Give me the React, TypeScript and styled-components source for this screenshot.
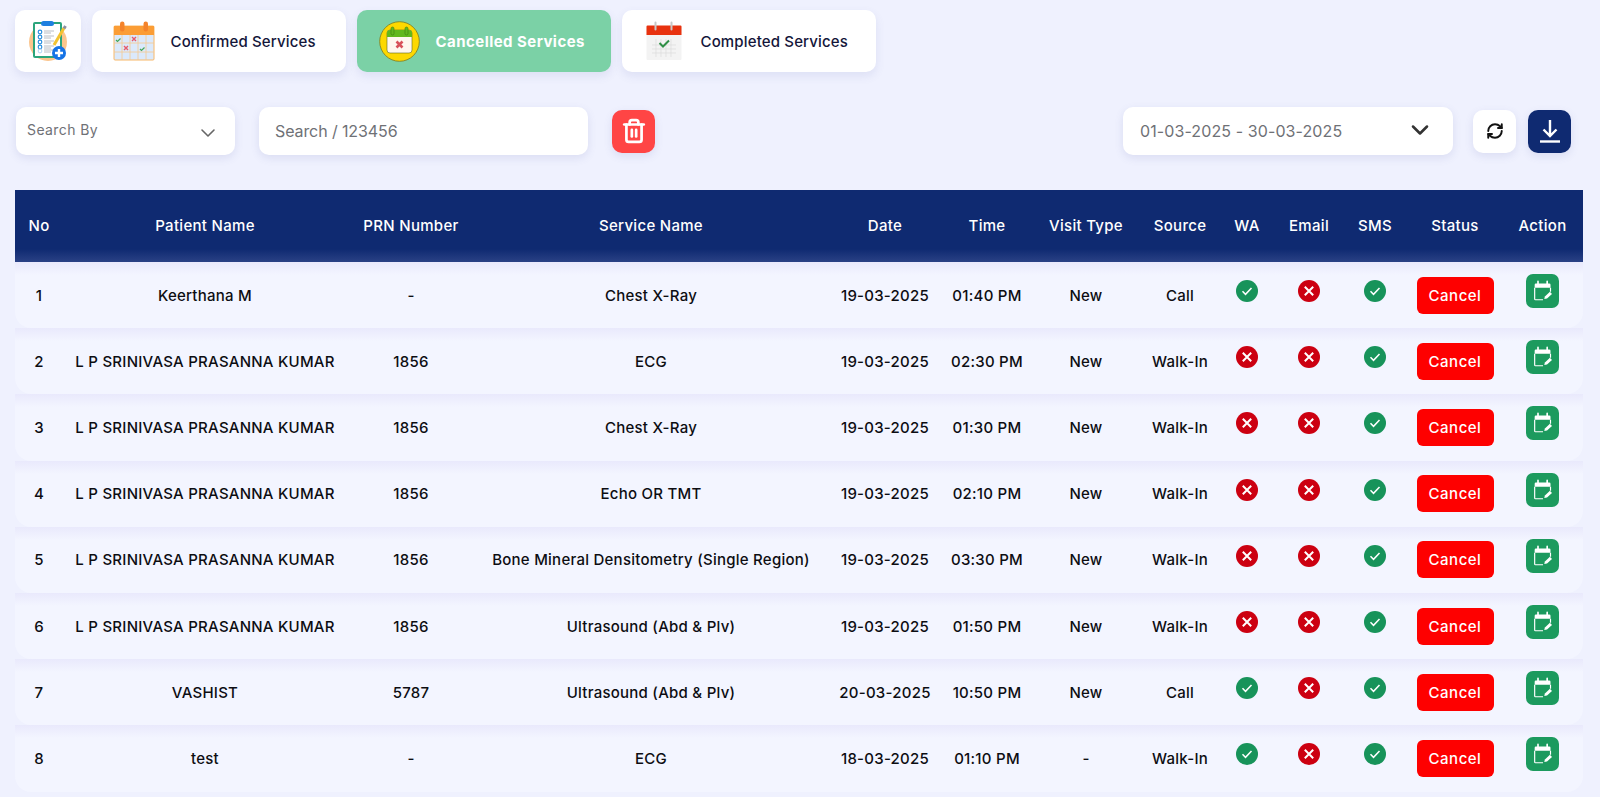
import * as React from 'react';
import styled, { createGlobalStyle } from 'styled-components';
import { ChevronDown, RefreshCw, Trash2 } from 'lucide-react';

const GlobalStyle = createGlobalStyle`
  html, body {
    margin: 0;
    padding: 0;
    height: 797px;
    overflow: hidden;
    background: #eff1fe;
    font-family: Inter, "Noto Sans", sans-serif;
  }
  * { box-sizing: border-box; }
`;

const Page = styled.div`
  padding: 10px 17px 0 15px;
`;

const Tabs = styled.div`
  display: flex;
  gap: 11px;
`;

const Tab = styled.div<{ $active?: boolean; $icon?: boolean }>`
  width: ${(p) => (p.$icon ? '66px' : '254px')};
  height: 62px;
  display: flex;
  align-items: center;
  justify-content: ${(p) => (p.$icon ? 'center' : 'flex-start')};
  padding-left: ${(p) => (p.$icon ? '0' : '12px')};
  gap: 6.5px;
  border-radius: 10px;
  background: ${(p) => (p.$active ? '#7bd1a6' : '#fff')};
  color: ${(p) => (p.$active ? '#fff' : '#14163a')};
  font-size: 15px;
  font-weight: ${(p) => (p.$active ? 700 : 500)};
  letter-spacing: ${(p) => (p.$active ? '0.45px' : '0.15px')};
  box-shadow: 0 4px 10px rgba(90, 100, 170, 0.12);
`;

const TabIcon = styled.span`
  width: 60px;
  display: flex;
  justify-content: center;
`;

const Toolbar = styled.div`
  display: flex;
  align-items: center;
  margin-top: 35px;
  padding-left: 1px;
  height: 48px;
`;

const Field = styled.div<{ $width: number; $size: number }>`
  width: ${(p) => p.$width}px;
  height: 48px;
  display: flex;
  align-items: center;
  justify-content: space-between;
  background: #fff;
  border-radius: 10px;
  color: #6f7176;
  font-size: ${(p) => p.$size}px;
  box-shadow: 0 3px 8px rgba(90, 100, 170, 0.14);
`;

const SelectField = styled(Field)`
  padding: 0 15px 4px 11px;
  margin-right: 24px;
  letter-spacing: 0.4px;
  svg { margin-top: 7px; }
`;

const SearchField = styled(Field)`
  padding: 0 16px;
  margin-right: 24px;
  letter-spacing: -0.1px;
`;

const DateField = styled(Field)`
  margin-left: auto;
  padding: 0 19px 0 17px;
  margin-right: 20px;
  letter-spacing: 0.1px;
  svg { margin-top: -2px; }
`;

const IconButton = styled.div<{ $bg: string }>`
  width: 43px;
  height: 43px;
  border-radius: 10px;
  display: flex;
  align-items: center;
  justify-content: center;
  background: ${(p) => p.$bg};
  box-shadow: 0 3px 8px rgba(90, 100, 170, 0.14);
  color: #fff;
`;

const ExportButton = styled(IconButton)`
  margin-left: 12px;
  margin-right: 12px;
`;

const columns = '48px 284px 128px 352px 116px 88px 110px 78px 56px 68px 64px 96px 79px';

const TableWrap = styled.div`
  margin-top: 35px;
  display: flex;
  flex-direction: column;
`;

const HeadRow = styled.div`
  display: grid;
  grid-template-columns: ${columns};
  align-items: center;
  height: 72px;
  padding-bottom: 2px;
  background: linear-gradient(#0f2a71 0, #0f2a71 82%, #2a4185 100%);
  color: #fff;
  font-size: 15px;
  font-weight: 500;
  letter-spacing: 0.3px;
`;

const Row = styled.div`
  display: grid;
  grid-template-columns: ${columns};
  align-items: center;
  height: 66.2px;
  background: linear-gradient(#e9e9fc 0, #f3f5ff 13px);
  border-radius: 0 0 16px 16px;
  color: #0d0d12;
  font-size: 15px;
  font-weight: 450;
  letter-spacing: 0.25px;
`;

const Cell = styled.div`
  text-align: center;
  white-space: nowrap;
  display: flex;
  justify-content: center;
  align-items: center;
`;

const IconCell = styled(Cell)`
  padding-bottom: 8px;
`;

const CancelButton = styled.div`
  width: 77px;
  height: 37px;
  border-radius: 6px;
  background: #fe0000;
  color: #fff;
  display: flex;
  align-items: center;
  justify-content: center;
  font-size: 15px;
  letter-spacing: 0.5px;
`;

const ActionButton = styled.div`
  width: 33px;
  height: 34px;
  border-radius: 7px;
  background: #1c9a5e;
  display: flex;
  align-items: center;
  justify-content: center;
`;

const StatusIcon = ({ ok }: { ok: boolean }) => (
  <svg width="22" height="22" viewBox="0 0 22 22">
    <circle cx="11" cy="11" r="11" fill={ok ? '#17935a' : '#cc0011'} />
    {ok ? (
      <path d="M6.5 11.3l3 3 6-6.4" fill="none" stroke="#fff" strokeWidth="1.5" />
    ) : (
      <path d="M6.8 6.8l8.4 8.4M15.2 6.8l-8.4 8.4" fill="none" stroke="#fff" strokeWidth="2" />
    )}
  </svg>
);

const CalendarEdit = () => (
  <svg width="20" height="22" viewBox="0 0 24 26" fill="none">
    <path d="M2 9h19V5.500a1.500 1.500 0 0 0-1.500-1.500h-16A1.500 1.500 0 0 0 2 5.500z" fill="#fff" />
    <path d="M6 1.500v4M17 1.500v4" stroke="#fff" strokeWidth="2" strokeLinecap="round" />
    <path d="M2 9v13.500a1 1 0 0 0 1 1h9M21 9v5" stroke="#fff" strokeWidth="1.400" />
    <path d="M13.500 22.500l.8-3 6-5.500 2.500 2.500-6 5.500z" fill="#fff" />
  </svg>
);

const ClipboardLogo = () => (
  <svg width="42" height="42" viewBox="0 0 42 42">
    <circle cx="21" cy="22" r="19" fill="#fbc58d" />
    <rect x="6" y="2" width="29" height="36" rx="2" fill="#2ba57c" />
    <rect x="8" y="4" width="25" height="32" fill="#fff" />
    <rect x="14" y="1" width="13" height="5" rx="2.500" fill="#1f80e0" />
    {[12, 17, 22, 27, 31].map((y) => (
      <g key={y}>
        <circle cx="13" cy={y} r="1.800" fill="none" stroke={y === 31 ? '#bcdcf5' : '#2b8fe0'} strokeWidth="1.200" />
        <path d={`M17 ${y - 1}h10M17 ${y + 1}h7`} stroke="#b9bdc4" strokeWidth="1" />
      </g>
    ))}
    <path d="M27 25L37 8" stroke="#f3c331" strokeWidth="3" />
    <path d="M37 8.500l1.500-2.500" stroke="#8a8fa0" strokeWidth="3" />
    <circle cx="32" cy="33" r="7" fill="#1573e6" />
    <path d="M32 29v8M28 33h8" stroke="#fff" strokeWidth="2.400" />
  </svg>
);

const ConfirmedLogo = () => (
  <svg width="42" height="40" viewBox="0 0 42 40">
    <rect x="1" y="5" width="40" height="34" rx="1" fill="#dbe9fb" stroke="#f8b869" />
    <rect x="1" y="5" width="40" height="9" fill="#fb9d35" />
    <rect x="7" y="0.500" width="4.500" height="10" rx="2.200" fill="#f4832a" />
    <rect x="30.500" y="0.500" width="4.500" height="10" rx="2.200" fill="#f4832a" />
    <path d="M1 22h40M1 31h40M9 14v25M17 14v25M25 14v25M33 14v25" stroke="#f6c88f" strokeWidth="0.800" />
    <path d="M3 19l1.500 1.500 3-3M27 28l1.500 1.500 3-3" stroke="#46a65a" strokeWidth="1.200" fill="none" />
    <path d="M19 16l4 4M23 16l-4 4M11 25l4 4M15 25l-4 4" stroke="#e65a6b" strokeWidth="1.400" />
  </svg>
);

const CancelledLogo = () => (
  <svg width="41" height="41" viewBox="0 0 41 41">
    <circle cx="20.500" cy="20.500" r="19.800" fill="#fdd800" stroke="#7d7a20" strokeWidth="0.800" />
    <rect x="8" y="9" width="25" height="23" rx="3" fill="#fff7ee" stroke="#5f6a20" strokeWidth="0.600" />
    <path d="M8 16v-4a3 3 0 0 1 3-3h19a3 3 0 0 1 3 3v4z" fill="#62b81c" />
    <rect x="12" y="6" width="3" height="8" rx="1.500" fill="#62b81c" stroke="#3e7a10" strokeWidth="0.600" />
    <rect x="26" y="6" width="3" height="8" rx="1.500" fill="#62b81c" stroke="#3e7a10" strokeWidth="0.600" />
    <path d="M17.500 20.500l6 6M23.500 20.500l-6 6" stroke="#d8525a" strokeWidth="2.600" />
  </svg>
);

const CompletedLogo = () => (
  <svg width="36" height="40" viewBox="0 0 36 40">
    <rect x="0.500" y="5" width="35" height="34" rx="1" fill="#f3f3f3" />
    <path d="M0.500 14V5.500a1 1 0 0 1 1-1h33a1 1 0 0 1 1 1V14z" fill="#e8320f" />
    <path d="M6 24h24M6 28h24M6 32h24M10 18v18M15 18v18M20 18v18M25 18v18" stroke="#d9d9d9" strokeWidth="0.600" />
    <path d="M9.500 1.500v7M25.500 1.500v7" stroke="#c8c8c8" strokeWidth="2" strokeLinecap="round" />
    <path d="M13.500 22l3.500 3.500 6-6" stroke="#2f8f46" strokeWidth="2" fill="none" />
  </svg>
);

const DownloadIcon = () => (
  <svg width="22" height="24" viewBox="0 0 22 24" fill="none" stroke="#fff" strokeWidth="2.400">
    <path d="M11 1v15M4.500 10.500L11 17l6.500-6.500" />
    <path d="M1 22.500h20" />
  </svg>
);

const headers = ['No', 'Patient Name', 'PRN Number', 'Service Name', 'Date', 'Time', 'Visit Type', 'Source', 'WA', 'Email', 'SMS', 'Status', 'Action'];

const LP = 'L P SRINIVASA PRASANNA KUMAR';
const rows = [
  { name: 'Keerthana M', prn: '-', service: 'Chest X-Ray', date: '19-03-2025', time: '01:40 PM', visit: 'New', source: 'Call', wa: true, sms: true },
  { name: LP, prn: '1856', service: 'ECG', date: '19-03-2025', time: '02:30 PM', visit: 'New', source: 'Walk-In', wa: false, sms: true },
  { name: LP, prn: '1856', service: 'Chest X-Ray', date: '19-03-2025', time: '01:30 PM', visit: 'New', source: 'Walk-In', wa: false, sms: true },
  { name: LP, prn: '1856', service: 'Echo OR TMT', date: '19-03-2025', time: '02:10 PM', visit: 'New', source: 'Walk-In', wa: false, sms: true },
  { name: LP, prn: '1856', service: 'Bone Mineral Densitometry (Single Region)', date: '19-03-2025', time: '03:30 PM', visit: 'New', source: 'Walk-In', wa: false, sms: true },
  { name: LP, prn: '1856', service: 'Ultrasound (Abd & Plv)', date: '19-03-2025', time: '01:50 PM', visit: 'New', source: 'Walk-In', wa: false, sms: true },
  { name: 'VASHIST', prn: '5787', service: 'Ultrasound (Abd & Plv)', date: '20-03-2025', time: '10:50 PM', visit: 'New', source: 'Call', wa: true, sms: true },
  { name: 'test', prn: '-', service: 'ECG', date: '18-03-2025', time: '01:10 PM', visit: '-', source: 'Walk-In', wa: true, sms: true },
];

const App = () => (
  <Page>
    <GlobalStyle />
    <Tabs>
      <Tab $icon><ClipboardLogo /></Tab>
      <Tab><TabIcon><ConfirmedLogo /></TabIcon>Confirmed Services</Tab>
      <Tab $active><TabIcon><CancelledLogo /></TabIcon>Cancelled Services</Tab>
      <Tab><TabIcon><CompletedLogo /></TabIcon>Completed Services</Tab>
    </Tabs>
    <Toolbar>
      <SelectField $width={219} $size={14}>
        Search By
        <ChevronDown size={24} color="#666" strokeWidth={1.6} />
      </SelectField>
      <SearchField $width={329} $size={16}>Search / 123456</SearchField>
      <IconButton $bg="#ff4545"><Trash2 size={26} strokeWidth={2.5} /></IconButton>
      <DateField $width={330} $size={16}>
        01-03-2025 - 30-03-2025
        <ChevronDown size={28} color="#333" strokeWidth={2.2} />
      </DateField>
      <IconButton $bg="#fff"><RefreshCw size={18} color="#111" strokeWidth={2.6} /></IconButton>
      <ExportButton $bg="#0f2a71"><DownloadIcon /></ExportButton>
    </Toolbar>
    <TableWrap>
      <HeadRow>
        {headers.map((h) => <Cell key={h}>{h}</Cell>)}
      </HeadRow>
      {rows.map((r, i) => (
        <Row key={i}>
          <Cell>{i + 1}</Cell>
          <Cell>{r.name}</Cell>
          <Cell>{r.prn}</Cell>
          <Cell>{r.service}</Cell>
          <Cell>{r.date}</Cell>
          <Cell>{r.time}</Cell>
          <Cell>{r.visit}</Cell>
          <Cell>{r.source}</Cell>
          <IconCell><StatusIcon ok={r.wa} /></IconCell>
          <IconCell><StatusIcon ok={false} /></IconCell>
          <IconCell><StatusIcon ok={r.sms} /></IconCell>
          <Cell><CancelButton>Cancel</CancelButton></Cell>
          <IconCell><ActionButton><CalendarEdit /></ActionButton></IconCell>
        </Row>
      ))}
    </TableWrap>
  </Page>
);

export default App;
